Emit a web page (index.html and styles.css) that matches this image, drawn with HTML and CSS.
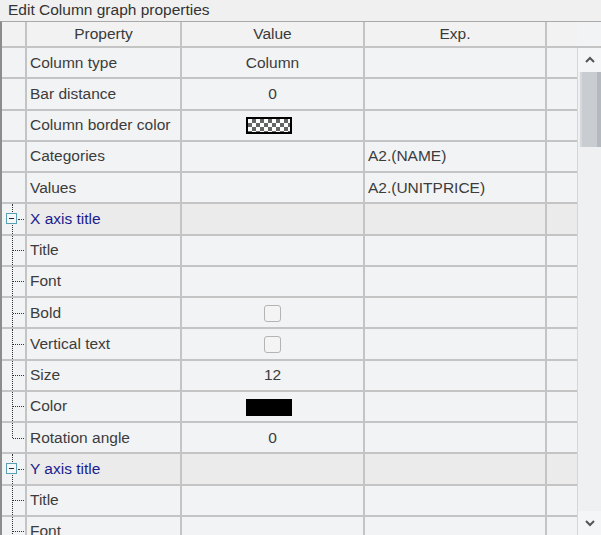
FILE: index.html
```html
<!DOCTYPE html>
<html>
  <head>
    <meta charset="utf-8" />
    <link rel="stylesheet" href="styles.css">
  </head>

  <body>
    <div class="title">Edit Column graph properties</div>

    <div id="frame">
      <div class="grid">
        <table>
          <colgroup>
            <col class="c-gutter" />
            <col class="c-prop" />
            <col class="c-value" />
            <col class="c-exp" />
            <col class="c-extra" />
          </colgroup>
          <thead>
            <tr>
              <th></th>
              <th>Property</th>
              <th>Value</th>
              <th>Exp.</th>
              <th></th>
            </tr>
          </thead>
          <tbody>
            <tr>
              <td></td>
              <td>Column type</td>
              <td class="val">Column</td>
              <td></td>
              <td></td>
            </tr>
            <tr>
              <td></td>
              <td>Bar distance</td>
              <td class="val">0</td>
              <td></td>
              <td></td>
            </tr>
            <tr>
              <td></td>
              <td>Column border color</td>
              <td class="val"><span class="swatch checker"></span></td>
              <td></td>
              <td></td>
            </tr>
            <tr>
              <td></td>
              <td>Categories</td>
              <td class="val"></td>
              <td>A2.(NAME)</td>
              <td></td>
            </tr>
            <tr>
              <td></td>
              <td>Values</td>
              <td class="val"></td>
              <td>A2.(UNITPRICE)</td>
              <td></td>
            </tr>
            <tr class="group">
              <td class="node node-group"><span class="toggle"></span></td>
              <td>X axis title</td>
              <td></td>
              <td></td>
              <td></td>
            </tr>
            <tr>
              <td class="node node-child"></td>
              <td>Title</td>
              <td class="val"></td>
              <td></td>
              <td></td>
            </tr>
            <tr>
              <td class="node node-child"></td>
              <td>Font</td>
              <td class="val"></td>
              <td></td>
              <td></td>
            </tr>
            <tr>
              <td class="node node-child"></td>
              <td>Bold</td>
              <td class="val"><span class="check"></span></td>
              <td></td>
              <td></td>
            </tr>
            <tr>
              <td class="node node-child"></td>
              <td>Vertical text</td>
              <td class="val"><span class="check"></span></td>
              <td></td>
              <td></td>
            </tr>
            <tr>
              <td class="node node-child"></td>
              <td>Size</td>
              <td class="val">12</td>
              <td></td>
              <td></td>
            </tr>
            <tr>
              <td class="node node-child"></td>
              <td>Color</td>
              <td class="val"><span class="swatch black"></span></td>
              <td></td>
              <td></td>
            </tr>
            <tr>
              <td class="node node-last"></td>
              <td>Rotation angle</td>
              <td class="val">0</td>
              <td></td>
              <td></td>
            </tr>
            <tr class="group">
              <td class="node node-group"><span class="toggle"></span></td>
              <td>Y axis title</td>
              <td></td>
              <td></td>
              <td></td>
            </tr>
            <tr>
              <td class="node node-child"></td>
              <td>Title</td>
              <td class="val"></td>
              <td></td>
              <td></td>
            </tr>
            <tr>
              <td class="node node-child"></td>
              <td>Font</td>
              <td class="val"></td>
              <td></td>
              <td></td>
            </tr>
          </tbody>
        </table>
      </div>

      <div class="scroll">
        <div class="scroll-head"></div>
        <div class="scroll-btn">
          <svg width="12" height="8" viewBox="0 0 12 8"><path d="M2 6 L6 2 L10 6" fill="none" stroke="#555" stroke-width="2" /></svg>
        </div>
        <div class="scroll-track">
          <div class="scroll-thumb"></div>
        </div>
        <div class="scroll-btn">
          <svg width="12" height="8" viewBox="0 0 12 8"><path d="M2 2 L6 6 L10 2" fill="none" stroke="#555" stroke-width="2" /></svg>
        </div>
      </div>
    </div>
  </body>
</html>
```

FILE: styles.css
```css
body {
  background-color: #f0f0f0;
  color: #3c3c3c;
  font-family: "Liberation Sans", Arial, sans-serif;
  font-size: 15.5px;
  margin: 0;
  padding: 0;
  width: 601px;
  height: 535px;
  overflow: hidden;
}

.title {
  height: 21px;
  line-height: 20px;
  padding-left: 8px;
  color: #333;
}

#frame {
  display: flex;
  height: 514px;
  border-top: 1px solid #a9a9a9;
  border-left: 2px solid #8c8c8c;
  box-sizing: border-box;
  overflow: hidden;
}

.grid {
  width: 575px;
  overflow: hidden;
}

table {
  border-collapse: collapse;
  table-layout: fixed;
  width: 576px;
  background-color: #f2f3f4;
}

.c-gutter {
  width: 24px;
}

.c-prop {
  width: 155px;
}

.c-value {
  width: 183px;
}

.c-exp {
  width: 182px;
}

.c-extra {
  width: 32px;
}

th {
  height: 24px;
  padding: 0;
  font-weight: normal;
  color: #3a3a3a;
  background-color: #f2f2f2;
  border: 2px solid #c4c4c4;
  border-top: none;
  border-left: none;
}

td {
  height: 29.25px;
  padding: 0 0 0 3px;
  border-right: 2px solid #c4c4c4;
  border-bottom: 2px solid #c4c4c4;
  white-space: nowrap;
  overflow: hidden;
}

td:first-child {
  padding: 0;
}

td.val {
  text-align: center;
  padding: 0;
}

tr.group td {
  background-color: #ebebeb;
}

tr.group td:first-child {
  background-color: #f2f3f4;
}

tr.group td:nth-child(2) {
  color: #1c1c8e;
}

.node {
  position: relative;
}

.node::before {
  content: "";
  position: absolute;
  left: 10px;
  top: 0;
  bottom: -2px;
  border-left: 1px dotted #333;
}

.node-last::before {
  bottom: 50%;
}

.node-child::after,
.node-last::after {
  content: "";
  position: absolute;
  left: 11px;
  width: 11px;
  top: 50%;
  border-top: 1px dotted #333;
}

.node-group::after {
  content: "";
  position: absolute;
  left: 16px;
  width: 6px;
  top: 50%;
  border-top: 1px dotted #333;
}

.toggle {
  position: absolute;
  left: 4px;
  top: 50%;
  margin-top: -6px;
  width: 9px;
  height: 9px;
  border: 1px solid #5aa0b4;
  background-color: #f4f8fa;
  z-index: 1;
}

.toggle::after {
  content: "";
  position: absolute;
  left: 2px;
  right: 2px;
  top: 4px;
  border-top: 1px solid #222;
}

.swatch {
  display: inline-block;
  width: 46px;
  height: 17px;
  margin-right: 8px;
  vertical-align: middle;
  border: 1px solid #000;
  box-sizing: border-box;
}

.black {
  background-color: #000;
}

.checker {
  border-width: 2px;
  background-color: #fff;
  background-image:
    linear-gradient(45deg, #666 25%, transparent 25%, transparent 75%, #666 75%),
    linear-gradient(45deg, #666 25%, transparent 25%, transparent 75%, #666 75%);
  background-size: 8px 8px;
  background-position: 0 0, 4px 4px;
}

.check {
  display: inline-block;
  width: 15px;
  height: 15px;
  margin-right: 1px;
  vertical-align: middle;
  border: 1px solid #b4b4b4;
  border-radius: 3px;
  background-color: #f4f4f4;
}

.scroll {
  width: 24px;
  display: flex;
  flex-direction: column;
  background-color: #f2f3f4;
}

.scroll-head {
  height: 24px;
  border-bottom: 2px solid #c4c4c4;
  flex: none;
}

.scroll-btn {
  height: 24px;
  flex: none;
  display: flex;
  align-items: center;
  justify-content: center;
  background-color: #f4f5f6;
  border-left: 1px solid #d6d6d6;
}

.scroll-track {
  flex: 1;
  border-left: 1px solid #d6d6d6;
  background-color: #eef0f2;
}

.scroll-thumb {
  height: 75px;
  margin-left: 2px;
  background-color: #c9cdd2;
  border-right: 4px solid #b4b9bf;
  border-left: 2px solid #d6d9dc;
}
```
